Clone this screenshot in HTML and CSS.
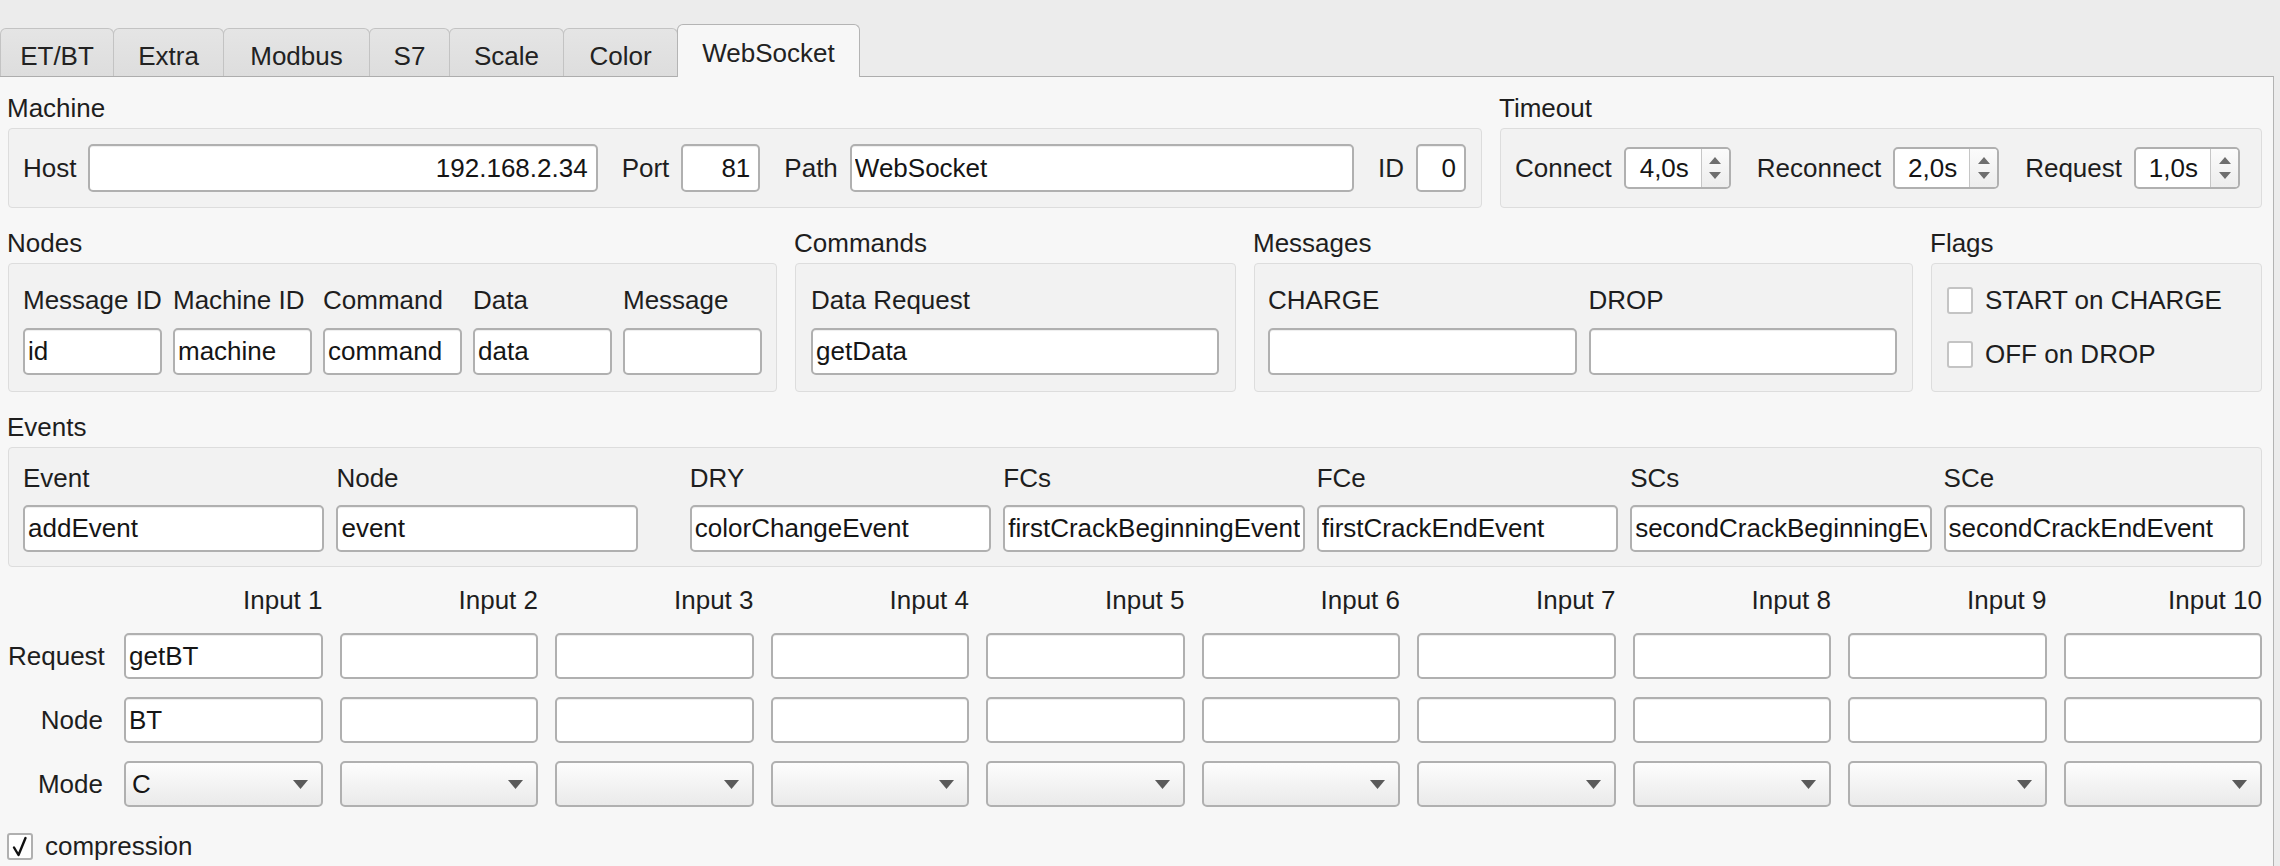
FILE: index.html
```html
<!DOCTYPE html>
<html lang="en">
<head>
<meta charset="utf-8">
<title>WebSocket</title>
<link rel="stylesheet" href="styles.css">
</head>
<body>
<div class="window">
  <div class="tabbar">
    <div class="tab w-etbt">ET/BT</div>
    <div class="tab w-extra">Extra</div>
    <div class="tab w-modbus">Modbus</div>
    <div class="tab w-s7">S7</div>
    <div class="tab w-scale">Scale</div>
    <div class="tab w-color">Color</div>
    <div class="tab active w-ws">WebSocket</div>
  </div>
  <div class="pane">
    <div class="row row1">
      <section class="sec sec-machine">
        <div class="group-title">Machine</div>
        <div class="box box-machine">
          <span class="lbl">Host</span>
          <input class="field f-host right" type="text" value="192.168.2.34" readonly>
          <span class="lbl pair">Port</span>
          <input class="field f-port right" type="text" value="81" readonly>
          <span class="lbl pair">Path</span>
          <input class="field f-path" type="text" value="WebSocket" readonly>
          <span class="lbl pair">ID</span>
          <input class="field f-id right" type="text" value="0" readonly>
        </div>
      </section>
      <section class="sec sec-timeout">
        <div class="group-title">Timeout</div>
        <div class="box box-timeout">
          <span class="lbl">Connect</span>
          <div class="spin s-connect"><span class="spin-val">4,0s</span><span class="spin-btn"><svg width="12" height="22" viewBox="0 0 12 22"><path d="M0 7L6 0L12 7Z M0 15L6 22L12 15Z" fill="#6e6e6e"/></svg></span></div>
          <span class="lbl pair">Reconnect</span>
          <div class="spin"><span class="spin-val">2,0s</span><span class="spin-btn"><svg width="12" height="22" viewBox="0 0 12 22"><path d="M0 7L6 0L12 7Z M0 15L6 22L12 15Z" fill="#6e6e6e"/></svg></span></div>
          <span class="lbl pair">Request</span>
          <div class="spin"><span class="spin-val">1,0s</span><span class="spin-btn"><svg width="12" height="22" viewBox="0 0 12 22"><path d="M0 7L6 0L12 7Z M0 15L6 22L12 15Z" fill="#6e6e6e"/></svg></span></div>
        </div>
      </section>
    </div>

    <div class="row row2">
      <section class="sec sec-nodes">
        <div class="group-title">Nodes</div>
        <div class="box box-nodes">
          <span class="cap">Message ID</span>
          <span class="cap">Machine ID</span>
          <span class="cap">Command</span>
          <span class="cap">Data</span>
          <span class="cap">Message</span>
          <input class="field" type="text" value="id" readonly>
          <input class="field" type="text" value="machine" readonly>
          <input class="field" type="text" value="command" readonly>
          <input class="field" type="text" value="data" readonly>
          <input class="field" type="text" value="" readonly>
        </div>
      </section>
      <section class="sec sec-commands">
        <div class="group-title">Commands</div>
        <div class="box box-commands">
          <span class="cap">Data Request</span>
          <input class="field" type="text" value="getData" readonly>
        </div>
      </section>
      <section class="sec sec-messages">
        <div class="group-title">Messages</div>
        <div class="box box-messages">
          <span class="cap">CHARGE</span>
          <span class="cap">DROP</span>
          <input class="field" type="text" value="" readonly>
          <input class="field" type="text" value="" readonly>
        </div>
      </section>
      <section class="sec sec-flags">
        <div class="group-title">Flags</div>
        <div class="box box-flags">
          <div class="check-row"><span class="checkbox"></span><span>START on CHARGE</span></div>
          <div class="check-row second"><span class="checkbox"></span><span>OFF on DROP</span></div>
        </div>
      </section>
    </div>

    <div class="row row3">
      <section class="sec sec-events">
        <div class="group-title">Events</div>
        <div class="box box-events">
          <span class="cap">Event</span>
          <span class="cap">Node</span>
          <span class="cap after-gap">DRY</span>
          <span class="cap">FCs</span>
          <span class="cap">FCe</span>
          <span class="cap">SCs</span>
          <span class="cap">SCe</span>
          <input class="field" type="text" value="addEvent" readonly>
          <input class="field" type="text" value="event" readonly>
          <input class="field after-gap" type="text" value="colorChangeEvent" readonly>
          <input class="field" type="text" value="firstCrackBeginningEvent" readonly>
          <input class="field" type="text" value="firstCrackEndEvent" readonly>
          <input class="field" type="text" value="secondCrackBeginningEvent" readonly>
          <input class="field" type="text" value="secondCrackEndEvent" readonly>
        </div>
      </section>
    </div>

    <div class="inputs">
      <span></span>
      <span class="head">Input 1</span>
      <span class="head">Input 2</span>
      <span class="head">Input 3</span>
      <span class="head">Input 4</span>
      <span class="head">Input 5</span>
      <span class="head">Input 6</span>
      <span class="head">Input 7</span>
      <span class="head">Input 8</span>
      <span class="head">Input 9</span>
      <span class="head">Input 10</span>

      <span class="rowlbl">Request</span>
      <input class="field" type="text" value="getBT" readonly>
      <input class="field" type="text" value="" readonly>
      <input class="field" type="text" value="" readonly>
      <input class="field" type="text" value="" readonly>
      <input class="field" type="text" value="" readonly>
      <input class="field" type="text" value="" readonly>
      <input class="field" type="text" value="" readonly>
      <input class="field" type="text" value="" readonly>
      <input class="field" type="text" value="" readonly>
      <input class="field" type="text" value="" readonly>

      <span class="rowlbl">Node</span>
      <input class="field" type="text" value="BT" readonly>
      <input class="field" type="text" value="" readonly>
      <input class="field" type="text" value="" readonly>
      <input class="field" type="text" value="" readonly>
      <input class="field" type="text" value="" readonly>
      <input class="field" type="text" value="" readonly>
      <input class="field" type="text" value="" readonly>
      <input class="field" type="text" value="" readonly>
      <input class="field" type="text" value="" readonly>
      <input class="field" type="text" value="" readonly>

      <span class="rowlbl">Mode</span>
      <div class="combo"><span>C</span><svg width="15" height="9" viewBox="0 0 15 9"><path d="M0 0H15L7.5 9Z" fill="#5a5a5a"/></svg></div>
      <div class="combo"><span></span><svg width="15" height="9" viewBox="0 0 15 9"><path d="M0 0H15L7.5 9Z" fill="#5a5a5a"/></svg></div>
      <div class="combo"><span></span><svg width="15" height="9" viewBox="0 0 15 9"><path d="M0 0H15L7.5 9Z" fill="#5a5a5a"/></svg></div>
      <div class="combo"><span></span><svg width="15" height="9" viewBox="0 0 15 9"><path d="M0 0H15L7.5 9Z" fill="#5a5a5a"/></svg></div>
      <div class="combo"><span></span><svg width="15" height="9" viewBox="0 0 15 9"><path d="M0 0H15L7.5 9Z" fill="#5a5a5a"/></svg></div>
      <div class="combo"><span></span><svg width="15" height="9" viewBox="0 0 15 9"><path d="M0 0H15L7.5 9Z" fill="#5a5a5a"/></svg></div>
      <div class="combo"><span></span><svg width="15" height="9" viewBox="0 0 15 9"><path d="M0 0H15L7.5 9Z" fill="#5a5a5a"/></svg></div>
      <div class="combo"><span></span><svg width="15" height="9" viewBox="0 0 15 9"><path d="M0 0H15L7.5 9Z" fill="#5a5a5a"/></svg></div>
      <div class="combo"><span></span><svg width="15" height="9" viewBox="0 0 15 9"><path d="M0 0H15L7.5 9Z" fill="#5a5a5a"/></svg></div>
      <div class="combo"><span></span><svg width="15" height="9" viewBox="0 0 15 9"><path d="M0 0H15L7.5 9Z" fill="#5a5a5a"/></svg></div>
    </div>

    <div class="check-row compression">
      <span class="checkbox checked"><svg width="22" height="23" viewBox="0 0 22 23"><path d="M5 12.5L9.5 20L16.5 3" fill="none" stroke="#111" stroke-width="2.4" stroke-linecap="round" stroke-linejoin="round"/></svg></span>
      <span>compression</span>
    </div>
  </div>
</div>
</body>
</html>
```

FILE: styles.css
```css
html, body {
  margin: 0;
  padding: 0;
}

body {
  background: #ececec;
  font-family: "Liberation Sans", Arial, Helvetica, sans-serif;
  font-size: 26px;
  color: #1e1e1e;
}

.window {
  width: 2280px;
  height: 866px;
  overflow: hidden;
}

/* ---------- tabs ---------- */
.tabbar {
  height: 76px;
  display: flex;
  align-items: flex-end;
}

.tab {
  box-sizing: border-box;
  height: 48px;
  padding-top: 6px;
  line-height: 42px;
  text-align: center;
  white-space: nowrap;
  background: linear-gradient(#e5e5e5, #dddddd);
  border: 1px solid #c3c3c3;
  border-bottom: none;
  border-radius: 6px 6px 0 0;
  margin-right: -1px;
  color: #222;
}

.tab.active {
  height: 53px;
  padding-top: 7px;
  background: #f7f7f7;
  border-color: #b4b4b4;
  margin-bottom: -1px;
  position: relative;
  z-index: 1;
}

.w-etbt { width: 114px; }
.w-extra { width: 111px; }
.w-modbus { width: 147px; }
.w-s7 { width: 81px; }
.w-scale { width: 115px; }
.w-color { width: 115px; }
.w-ws { width: 183px; }

/* ---------- pane ---------- */
.pane {
  box-sizing: border-box;
  width: 2274px;
  height: 790px;
  background: #f7f7f7;
  border-top: 1px solid #adadad;
  border-right: 1px solid #b3b3b3;
  padding: 16px 11px 0 8px;
}

.row {
  display: flex;
  gap: 18px;
}

.row2 { margin-top: 20px; }
.row3 { margin-top: 20px; }

.sec {
  display: flex;
  flex-direction: column;
}

.group-title {
  height: 30px;
  line-height: 30px;
  margin-left: -1px;
  margin-bottom: 5px;
  white-space: nowrap;
}

.box {
  box-sizing: border-box;
  flex: 1 0 auto;
  background: #f2f2f2;
  border: 1px solid #dddddd;
  border-radius: 4px;
}

.lbl {
  white-space: nowrap;
  margin-right: 12px;
}

.lbl.pair {
  margin-left: 24px;
}

.cap {
  height: 30px;
  line-height: 30px;
  white-space: nowrap;
}

/* ---------- fields ---------- */
.field {
  box-sizing: border-box;
  display: block;
  width: 100%;
  min-width: 0;
  height: 47px;
  margin: 0;
  padding: 0 3px;
  border: 2px solid #b0b0b0;
  border-radius: 5px;
  background: #ffffff;
  box-shadow: inset 0 2px 1px -1px rgba(0, 0, 0, 0.07);
  font-family: inherit;
  font-size: 26px;
  color: #151515;
  outline: none;
}

.field.right {
  text-align: right;
  padding-right: 8px;
}

/* ---------- row 1 ---------- */
.sec-machine { width: 1474px; }
.sec-timeout { flex: 1; }

.box-machine {
  height: 80px;
  display: flex;
  align-items: center;
  padding: 0 15px 0 14px;
}

.box-machine .field { height: 48px; }
.f-host { flex: 1; }
.f-path { flex: 1; }
.f-port { width: 79px; }
.f-id { width: 50px; }

.box-timeout {
  height: 80px;
  display: flex;
  align-items: center;
  padding: 0 16px 0 14px;
}

.box-timeout .lbl.pair { margin-left: 26px; }

.spin {
  box-sizing: border-box;
  display: flex;
  width: 106px;
  height: 42px;
  border: 2px solid #b0b0b0;
  border-radius: 5px;
  background: #ffffff;
  overflow: hidden;
}

.spin.s-connect { width: 107px; }

.spin-val {
  flex: 1;
  text-align: right;
  padding-right: 12px;
  line-height: 38px;
  color: #151515;
}

.spin-btn {
  width: 27px;
  border-left: 1px solid #c6c6c6;
  background: linear-gradient(#fbfbfb, #ededed);
  display: flex;
  align-items: center;
  justify-content: center;
}

/* ---------- row 2 ---------- */
.sec-nodes { width: 769px; }
.sec-commands { width: 441px; }
.sec-messages { width: 659px; }
.sec-flags { flex: 1; }

.box-nodes,
.box-commands,
.box-messages {
  display: grid;
  grid-template-rows: 30px 47px;
  row-gap: 13px;
  align-content: start;
}

.box-nodes {
  grid-template-columns: repeat(5, 1fr);
  column-gap: 11px;
  padding: 21px 14px 16px 14px;
}

.box-commands {
  grid-template-columns: 1fr;
  padding: 21px 16px 16px 15px;
}

.box-messages {
  grid-template-columns: 1fr 1fr;
  column-gap: 12px;
  padding: 21px 15px 16px 13px;
}

.box-flags {
  display: flex;
  flex-direction: column;
  padding: 21px 8px 16px 15px;
}

.check-row {
  display: flex;
  align-items: center;
  gap: 12px;
  height: 30px;
  white-space: nowrap;
}

.check-row.second { margin-top: 24px; }

.checkbox {
  box-sizing: border-box;
  width: 26px;
  height: 27px;
  flex: none;
  background: #ffffff;
  border: 2px solid #c4c4c4;
  border-radius: 3px;
  display: flex;
  align-items: center;
  justify-content: center;
}

.checkbox.checked {
  border-color: #b0b0b0;
}

/* ---------- row 3 ---------- */
.sec-events { flex: 1; }

.box-events {
  display: grid;
  grid-template-columns: 1fr 1fr 28px 1fr 1fr 1fr 1fr 1fr;
  grid-template-rows: 30px 47px;
  column-gap: 12px;
  row-gap: 12px;
  padding: 15px 16px 14px 14px;
}

.box-events .after-gap { grid-column-start: 4; }

/* ---------- inputs grid ---------- */
.inputs {
  margin-top: 19px;
  display: grid;
  grid-template-columns: 99px repeat(10, 1fr);
  grid-template-rows: 29px 46px 46px 46px;
  column-gap: 17px;
  row-gap: 18px;
}

.inputs .field { height: 46px; }

.head {
  text-align: right;
  line-height: 29px;
  white-space: nowrap;
}

.rowlbl {
  text-align: right;
  padding-right: 4px;
  line-height: 46px;
  white-space: nowrap;
}

.combo {
  box-sizing: border-box;
  height: 46px;
  display: flex;
  align-items: center;
  justify-content: space-between;
  padding: 0 13px 0 6px;
  border: 2px solid #b0b0b0;
  border-radius: 5px;
  background: linear-gradient(#fdfdfd, #eaeaea);
  color: #151515;
}

.compression {
  margin-top: 24px;
  margin-left: -1px;
}
```
